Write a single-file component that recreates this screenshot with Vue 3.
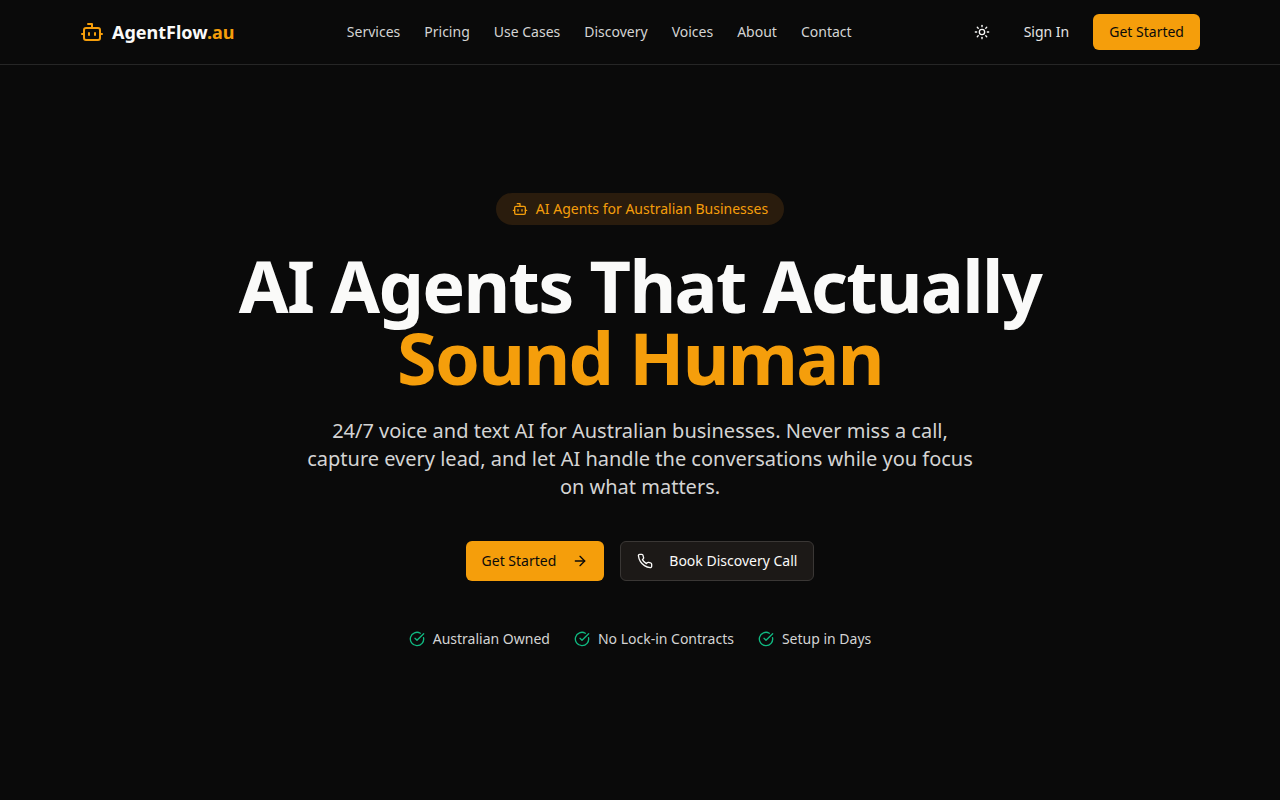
<script setup>
const links = ['Services', 'Pricing', 'Use Cases', 'Discovery', 'Voices', 'About', 'Contact']
const perks = ['Australian Owned', 'No Lock-in Contracts', 'Setup in Days']
</script>

<template>
  <div class="page">
    <header class="topbar">
      <div class="topbar__inner">
        <a class="logo">
          <svg class="logo__icon" viewBox="0 0 24 24">
            <path d="M12 8V4H8" />
            <rect width="16" height="12" x="4" y="8" rx="2" />
            <path d="M2 14h2" />
            <path d="M20 14h2" />
            <path d="M15 13v2" />
            <path d="M9 13v2" />
          </svg>
          <span>AgentFlow<span class="accent">.au</span></span>
        </a>
        <nav class="nav">
          <a v-for="link in links" :key="link">{{ link }}</a>
        </nav>
        <div class="actions">
          <button class="theme">
            <svg viewBox="0 0 24 24">
              <circle cx="12" cy="12" r="4" />
              <path d="M12 2v2" />
              <path d="M12 20v2" />
              <path d="m4.93 4.93 1.41 1.41" />
              <path d="m17.66 17.66 1.41 1.41" />
              <path d="M2 12h2" />
              <path d="M20 12h2" />
              <path d="m6.34 17.66-1.41 1.41" />
              <path d="m19.07 4.93-1.41 1.41" />
            </svg>
          </button>
          <a class="signin">Sign In</a>
          <a class="btn btn--primary btn--small">Get Started</a>
        </div>
      </div>
    </header>

    <main class="hero">
      <div class="badge">
        <svg viewBox="0 0 24 24">
          <path d="M12 8V4H8" />
          <rect width="16" height="12" x="4" y="8" rx="2" />
          <path d="M2 14h2" />
          <path d="M20 14h2" />
          <path d="M15 13v2" />
          <path d="M9 13v2" />
        </svg>
        AI Agents for Australian Businesses
      </div>
      <h1>AI Agents That Actually<br><span class="accent">Sound Human</span></h1>
      <p class="lead">24/7 voice and text AI for Australian businesses. Never miss a call, capture every lead, and let AI handle the conversations while you focus on what matters.</p>
      <div class="cta">
        <a class="btn btn--primary">
          Get Started
          <svg viewBox="0 0 24 24">
            <path d="M5 12h14" />
            <path d="m12 5 7 7-7 7" />
          </svg>
        </a>
        <a class="btn btn--dark">
          <svg viewBox="0 0 24 24">
            <path d="M22 16.92v3a2 2 0 0 1-2.18 2 19.79 19.79 0 0 1-8.63-3.07 19.5 19.5 0 0 1-6-6 19.79 19.79 0 0 1-3.07-8.67A2 2 0 0 1 4.11 2h3a2 2 0 0 1 2 1.72 12.84 12.84 0 0 0 .7 2.81 2 2 0 0 1-.45 2.11L8.09 9.91a16 16 0 0 0 6 6l1.27-1.27a2 2 0 0 1 2.11-.45 12.84 12.84 0 0 0 2.81.7A2 2 0 0 1 22 16.92z" />
          </svg>
          Book Discovery Call
        </a>
      </div>
      <ul class="perks">
        <li v-for="perk in perks" :key="perk">
          <svg viewBox="0 0 24 24">
            <path d="M21.801 10A10 10 0 1 1 17 3.335" />
            <path d="m9 11 3 3L22 4" />
          </svg>
          {{ perk }}
        </li>
      </ul>
    </main>
  </div>
</template>

<style>
  body {
    background-color: #0a0a0a;
  }
</style>

<style scoped>
  .page {
    min-height: 800px;
    background-color: #0a0a0a;
    color: #fafaf9;
    font-family: "Noto Sans", sans-serif;
    overflow: hidden;
  }

  svg {
    width: 16px;
    height: 16px;
    fill: none;
    stroke: currentColor;
    stroke-width: 2;
    stroke-linecap: round;
    stroke-linejoin: round;
    flex-shrink: 0;
  }

  .accent {
    color: #f59e0b;
  }

  .topbar {
    height: 64px;
    border-bottom: 1px solid #262626;
  }

  .topbar__inner {
    width: 1120px;
    height: 100%;
    margin: 0 auto;
    display: flex;
    align-items: center;
    justify-content: space-between;
  }

  .logo {
    display: flex;
    align-items: center;
    gap: 8px;
    font-size: 18px;
    font-weight: 700;
    line-height: 28px;
  }

  .logo__icon {
    width: 24px;
    height: 24px;
    color: #f59e0b;
  }

  .nav {
    display: flex;
    gap: 24px;
    margin-left: 0.3px;
    font-size: 14px;
    line-height: 20px;
    color: #d4d4d4;
  }

  .actions {
    display: flex;
    align-items: center;
    gap: 16px;
  }

  .theme {
    width: 36px;
    height: 36px;
    padding: 0;
    border: 0;
    background: none;
    color: #fafaf9;
    display: flex;
    align-items: center;
    justify-content: center;
  }

  .signin {
    padding: 8px;
    font-size: 14px;
    line-height: 20px;
    color: #e5e5e5;
  }

  .btn {
    display: inline-flex;
    align-items: center;
    height: 40px;
    box-sizing: border-box;
    padding: 0 16px;
    gap: 16px;
    border-radius: 6px;
    font-size: 14px;
    line-height: 20px;
  }

  .btn--small {
    height: 36px;
  }

  .btn--primary {
    background-color: #f59e0b;
    color: #0a0a0a;
  }

  .btn--dark {
    background-color: #1c1917;
    border: 1px solid #3a3735;
    color: #fafaf9;
  }

  .hero {
    display: flex;
    flex-direction: column;
    align-items: center;
    padding-top: 128px;
  }

  .badge {
    display: flex;
    align-items: center;
    gap: 8px;
    height: 32px;
    box-sizing: border-box;
    padding: 0 16px;
    border-radius: 16px;
    background-color: #2a1c0d;
    color: #f59e0b;
    font-size: 14px;
    line-height: 20px;
  }

  h1 {
    margin: 24px 0 0;
    font-size: 72px;
    line-height: 72px;
    font-weight: 700;
    text-align: center;
    letter-spacing: -1.7px;
  }

  .lead {
    width: 672px;
    margin: 24px 0 0;
    font-size: 20px;
    line-height: 28px;
    text-align: center;
    color: #d4d4d4;
  }

  .cta {
    display: flex;
    gap: 16px;
    margin-top: 40px;
  }

  .perks {
    display: flex;
    gap: 24px;
    margin: 48px 0 0;
    padding: 0;
    list-style: none;
    font-size: 14px;
    line-height: 20px;
    color: #d4d4d4;
  }

  .perks li {
    display: flex;
    align-items: center;
    gap: 8px;
  }

  .perks svg {
    color: #10b981;
  }
</style>
